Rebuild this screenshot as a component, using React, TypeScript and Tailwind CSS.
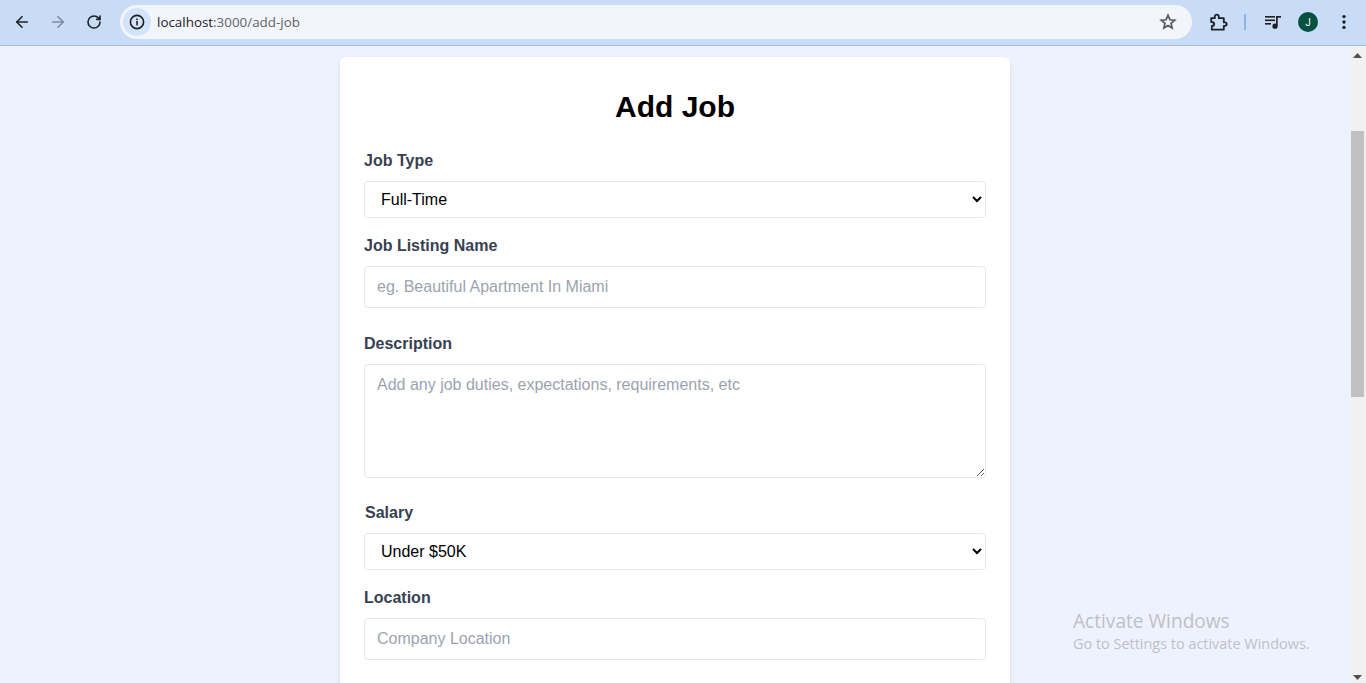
import React from 'react';
import { ArrowLeft, ArrowRight, RotateCw } from 'lucide-react';

const BrowserBar: React.FC = () => (
  <div className="h-[46px] shrink-0 flex items-center bg-[#c9dcf7] border-b border-[#a9bcd9]">
    <div className="flex items-center gap-[12px] pl-[10px] pr-[14px] -mt-[1px]">
      <div className="w-[24px] h-[24px] flex items-center justify-center text-[#1f2023]">
        <ArrowLeft size={18} strokeWidth={2.2} />
      </div>
      <div className="w-[24px] h-[24px] flex items-center justify-center text-[#7f8b9c]">
        <ArrowRight size={18} strokeWidth={2.2} />
      </div>
      <div className="w-[24px] h-[24px] flex items-center justify-center text-[#1f2023]">
        <RotateCw size={16} strokeWidth={2.4} />
      </div>
    </div>
    <div className="w-[1072px] h-[34px] -mt-[1px] rounded-full bg-[#f2f6fc] flex items-center pl-[3px] pr-[15px]">
      <div className="w-[28px] h-[28px] rounded-full bg-[#d3e3fb] flex items-center justify-center text-[#1f2023]">
        <svg width="16" height="16" viewBox="0 0 16 16" fill="none">
          <circle cx="8" cy="8" r="6.6" stroke="currentColor" strokeWidth="1.6" />
          <rect x="7.2" y="7" width="1.6" height="4.4" fill="currentColor" />
          <rect x="7.2" y="4.5" width="1.6" height="1.6" fill="currentColor" />
        </svg>
      </div>
      <div className="ml-[6px] text-[13.4px] font-['Open_Sans',sans-serif] text-[#5f6368]">
        <span className="text-[#1f2023]">localhost</span>:3000/add-job
      </div>
      <div className="ml-auto text-[#55585e]">
        <svg className="block" width="18" height="18" viewBox="0 0 24 24" fill="none">
          <path
            d="M12 17.27 18.18 21l-1.64-7.03L22 9.24l-7.19-.61L12 2 9.19 8.63 2 9.24l5.46 4.73L5.82 21z"
            stroke="currentColor"
            strokeWidth="2.5"
            strokeLinejoin="miter"
            transform="translate(1.2 1.2) scale(0.9)"
          />
        </svg>
      </div>
    </div>
    <div className="flex items-center flex-1 -mt-[1px]">
      <div className="ml-[17px] text-[#1f2023]">
        <svg className="block" width="20" height="20" viewBox="0 0 20 20" fill="none">
          <path
            d="M2.2 6.2h3.6V4.6a2 2 0 0 1 4 0v1.6h5v4.2h1.2a1.7 1.7 0 0 1 0 3.4h-1.2v3.9H2.8v-3.7c1.6 0 2.4-.9 2.4-2s-1-2-3-2z"
            stroke="currentColor"
            strokeWidth="1.8"
            strokeLinejoin="round"
          />
        </svg>
      </div>
      <div className="ml-[15px] w-[2px] h-[16px] bg-[#8fb3ea]" />
      <div className="ml-[18px] text-[#1f2023]">
        <svg className="block" width="18" height="18" viewBox="0 0 18 18" fill="currentColor">
          <rect x="1" y="3" width="10" height="1.6" />
          <rect x="1" y="6.5" width="10" height="1.6" />
          <rect x="1" y="10" width="6" height="1.6" />
          <circle cx="11" cy="13.2" r="2.6" />
          <rect x="12" y="3" width="1.7" height="10" />
          <rect x="12" y="3" width="5" height="1.7" />
        </svg>
      </div>
      <div className="ml-[16px] w-[20px] h-[20px] rounded-full bg-[#04513f] text-white text-[10px] flex items-center justify-center font-['Roboto',sans-serif]">
        J
      </div>
      <div className="ml-[17px] text-[#1f2023]">
        <svg className="block" width="18" height="18" viewBox="0 0 18 18" fill="currentColor">
          <circle cx="9" cy="3.6" r="1.7" />
          <circle cx="9" cy="9" r="1.7" />
          <circle cx="9" cy="14.4" r="1.7" />
        </svg>
      </div>
    </div>
  </div>
);

const Label: React.FC<{ text: string; className?: string }> = ({ text, className }) => (
  <label className={`block mb-2 text-[16px] leading-6 font-bold text-[#374151] ${className || ''}`}>{text}</label>
);

const selectClass = 'block w-full h-[37px] border border-[#e5e7eb] rounded bg-white px-3 text-[16px] text-black';
const inputClass = 'block w-full h-[42px] border border-[#e5e7eb] rounded bg-white px-3 py-2 text-[16px] leading-6 placeholder:text-[#9ca3af]';

const AddJobForm: React.FC = () => (
  <div className="w-[670px] mx-auto mt-[11px] bg-white rounded-md shadow-md px-6 pt-8 pb-8 font-['Liberation_Sans',Arial,sans-serif]">
    <h2 className="text-[30px] leading-9 font-bold text-center text-black mb-6">Add Job</h2>

    <Label text="Job Type" />
    <select className={`${selectClass} mb-4`} defaultValue="Full-Time">
      <option>Full-Time</option>
      <option>Part-Time</option>
      <option>Remote</option>
      <option>Internship</option>
    </select>

    <Label text="Job Listing Name" />
    <input className={`${inputClass} mb-6`} placeholder="eg. Beautiful Apartment In Miami" />

    <Label text="Description" />
    <textarea
      className="block w-full h-[114px] border border-[#e5e7eb] rounded bg-white px-3 py-2 text-[16px] leading-6 placeholder:text-[#9ca3af] mb-[23px]"
      placeholder="Add any job duties, expectations, requirements, etc"
    />

    <Label text="Salary" className="ml-px" />
    <select className={`${selectClass} mb-4`} defaultValue="Under $50K">
      <option>Under $50K</option>
      <option>$50K - $60K</option>
      <option>$60K - $70K</option>
    </select>

    <Label text="Location" />
    <input className={`${inputClass} mb-6`} placeholder="Company Location" />
  </div>
);

const ScrollTrack: React.FC = () => (
  <div className="w-[15px] shrink-0 bg-[#f1f1f1] flex flex-col items-start">
    <svg className="mt-[7px] ml-[2px]" width="9" height="5" viewBox="0 0 9 5" fill="#505050">
      <path d="M4.5 0 9 5H0z" />
    </svg>
    <div className="w-[13px] h-[266px] mt-[73px] bg-[#c1c1c1]" />
    <svg className="mt-auto mb-[3px] ml-[2px]" width="9" height="5" viewBox="0 0 9 5" fill="#505050">
      <path d="M4.5 5 9 0H0z" />
    </svg>
  </div>
);

const App: React.FC = () => {
  return (
    <div className="h-[683px] w-full overflow-hidden flex flex-col">
      <BrowserBar />
      <div className="flex flex-1 min-h-0 relative bg-[#eef2ff]">
        <div className="flex-1 min-w-0 overflow-hidden pr-px">
          <AddJobForm />
        </div>
        <ScrollTrack />
        <div className="absolute left-[1073px] top-[562px] text-[#bfc0c6] font-['Open_Sans',sans-serif] pointer-events-none">
          <div className="text-[19.1px] leading-[26px]">Activate Windows</div>
          <div className="text-[14.45px] leading-[20px]">Go to Settings to activate Windows.</div>
        </div>
      </div>
    </div>
  );
};

export default App;
